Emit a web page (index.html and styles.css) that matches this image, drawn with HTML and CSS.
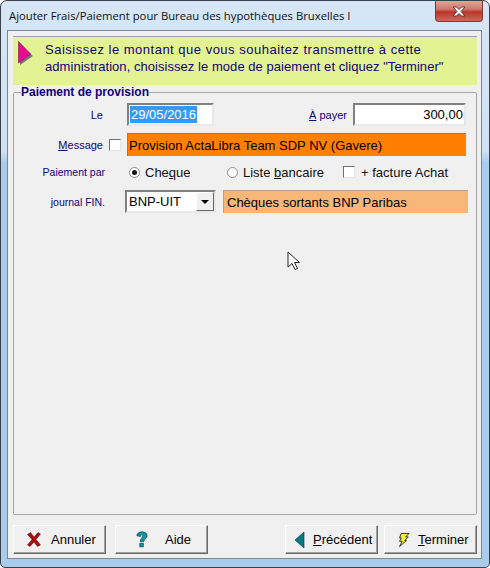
FILE: index.html
```html
<!DOCTYPE html>
<html lang="fr">
<head>
    <meta charset="UTF-8">
    <title>Ajouter Frais/Paiement</title>
    <link rel="stylesheet" href="styles.css">
</head>
<body>
    <div class="window">
        <!-- Title bar -->
        <div class="titlebar">
            <span class="title">Ajouter Frais/Paiement pour Bureau des hypothèques Bruxelles I</span>
            <div class="close">
                <svg width="16" height="11" viewBox="0 0 16 11"><path d="M2 1h3.500l2.500 2.500 2.500-2.500h3.500l-4 4.500 4 4.500h-3.500l-2.500-2.500-2.500 2.500h-3.500l4-4.500z" fill="#fff" stroke="#5a3a3a" stroke-width="1"/></svg>
            </div>
        </div>

        <div class="client">
            <!-- Hint band -->
            <div class="hint">
                <svg class="hint-arrow" width="15" height="24" viewBox="0 0 15 24">
                    <path d="M2 3l13 12-13 9z" fill="#777"/>
                    <path d="M0.500 0.500l12 12.500-12 9z" fill="#ee0a8c" stroke="#8a0a60" stroke-width="0.600"/>
                </svg>
                <p class="hint-text"><span class="line-one">Saisissez le montant que vous souhaitez transmettre à cette</span><br><span class="line-two">administration, choisissez le mode de paiement et cliquez "Terminer"</span></p>
            </div>

            <!-- Group box -->
            <fieldset class="group">
                <legend>Paiement de provision</legend>

                <div class="row row-date">
                    <label class="lbl">Le</label>
                    <div class="input input-date"><span class="selected">29/05/2016</span></div>
                    <label class="lbl lbl-payer"><u>À</u> payer</label>
                    <div class="input input-amount">300,00</div>
                </div>

                <div class="row row-message">
                    <label class="lbl"><u>M</u>essage</label>
                    <span class="check"></span>
                    <div class="readonly orange">Provision ActaLibra Team SDP NV (Gavere)</div>
                </div>

                <div class="row row-mode">
                    <label class="lbl">Paiement par</label>
                    <span class="radio on"></span>
                    <span class="opt opt-cheque">Che<u>q</u>ue</span>
                    <span class="radio"></span>
                    <span class="opt opt-liste">Liste <u>b</u>ancaire</span>
                    <span class="check"></span>
                    <span class="opt">+ facture Achat</span>
                </div>

                <div class="row row-journal">
                    <label class="lbl">journal FIN.</label>
                    <div class="combo">
                        <span class="combo-value">BNP-UIT</span>
                        <span class="combo-btn"><i></i></span>
                    </div>
                    <div class="readonly peach">Chèques sortants BNP Paribas</div>
                </div>
            </fieldset>

            <!-- Buttons -->
            <div class="buttons">
                <div class="btn-group">
                    <button class="btn btn-annuler">
                        <svg width="14" height="15" viewBox="0 0 14 15"><path d="M0.500 2.500l3-2 3.500 4.500 4-4.500 2.500 1.500-4.500 5.500 4.500 5.500-3 1.500-3.500-4.500-4 4.500-2.500-1.500 4.500-5.500z" fill="#a80d0d" stroke="#5c1010" stroke-width="0.500"/></svg>
                        <span>Annuler</span>
                    </button>
                    <button class="btn btn-aide">
                        <svg width="12" height="18" viewBox="0 0 14 20"><path d="M1 5c0-3 3-4.500 6-4.500s6 1.500 6 4.500c0 3-4 4-4 7h-4c0-4 3-4.500 3-7 0-1.500-3-1.500-3 1z" fill="#0a96a8" stroke="#06303a" stroke-width="0.700"/><rect x="4.500" y="14" width="4" height="4" fill="#0a96a8" stroke="#06303a" stroke-width="0.700"/></svg>
                        <span>Aide</span>
                    </button>
                </div>
                <div class="btn-group btn-group-right">
                    <button class="btn btn-prev">
                        <svg width="10" height="16" viewBox="0 0 10 16"><path d="M9 0v16l-9-8z" fill="#067a80" stroke="#0a2a50" stroke-width="0.600"/></svg>
                        <span><u>P</u>récédent</span>
                    </button>
                    <button class="btn btn-end">
                        <svg width="14" height="16" viewBox="0 0 16 17"><path d="M6 1h9l-4 4h3l-4 4h2l-8 7 3-6h-3l2-4h-2z" fill="#f8ee40" stroke="#222" stroke-width="1"/></svg>
                        <span><u>T</u>erminer</span>
                    </button>
                </div>
            </div>
        </div>

        <!-- Mouse pointer, lies over the form -->
        <svg class="pointer" width="14" height="20" viewBox="0 0 14 20"><path d="M1 1v15l4-3.500 3 6 2.500-1-3-6h5z" fill="#fff" stroke="#222" stroke-width="1"/></svg>
    </div>
</body>
</html>
```

FILE: styles.css
```css
/* Page */
html, body {
    margin: 0;
    height: 100%;
}

body {
    font-family: "Liberation Sans", Arial, sans-serif;
    font-size: 13px;
    color: #000;
}

/* Aero window frame */
.window {
    position: relative;
    box-sizing: border-box;
    width: 490px;
    height: 568px;
    display: flex;
    flex-direction: column;
    padding: 0 7px 8px 6px;
    border: 1px solid #3a4048;
    border-radius: 7px 7px 5px 5px;
    background: linear-gradient(to bottom, #d6e6f6 0, #cfe2f5 150px, #a9cbec 162px, #a9cbec 100%);
}

.titlebar {
    height: 29px;
    flex: none;
    display: flex;
    align-items: flex-start;
    justify-content: space-between;
}

.title {
    font-family: "Open Sans", "Noto Sans", sans-serif;
    font-size: 11.300px;
    line-height: 16px;
    margin: 7px 0 0 2px;
    color: #111;
}

.close {
    width: 46px;
    height: 20px;
    margin-right: -1px;
    display: flex;
    align-items: center;
    justify-content: center;
    border: 1px solid #7a3a38;
    border-top: 0;
    border-radius: 0 0 4px 4px;
    background: linear-gradient(to bottom, #e0a59a 0, #cf7a6e 40%, #b8342a 55%, #d0685a 100%);
}

/* Client area */
.client {
    flex: 1;
    min-height: 0;
    display: flex;
    flex-direction: column;
    padding: 5px 4px 4px 5px;
    background: #f0f0f0;
    border: 1px solid #7d8794;
}

/* Hint */
.hint {
    flex: none;
    height: 49px;
    display: flex;
    align-items: flex-start;
    gap: 12px;
    padding: 0 0 0 5px;
    background: #e3f393;
    border-top: 1px solid #a0a0a0;
    box-sizing: border-box;
}

.hint-arrow {
    margin-top: 4px;
    flex: none;
}

.hint-text {
    margin: 4px 0 0 0;
    font-size: 13px;
    line-height: 17px;
    color: #14007a;
    white-space: nowrap;
}

.line-one {
    letter-spacing: 0.500px;
}

.line-two {
    letter-spacing: 0.050px;
}

/* Group box */
.group {
    flex: 1;
    min-height: 0;
    margin: 0;
    padding: 0;
    border: 1px solid #a8a8a8;
    border-radius: 2px;
}

.group legend {
    margin-left: 7px;
    padding: 0;
    font-size: 12px;
    font-weight: bold;
    line-height: 15px;
    color: #14007a;
}

.row {
    display: flex;
    align-items: center;
}

.lbl {
    flex: none;
    width: 89px;
    text-align: right;
    font-size: 11px;
    color: #14007a;
}

.row-date {
    height: 23px;
    margin-top: 3px;
}

.row-date .lbl {
    margin-right: 24px;
}

.row-date .lbl-payer {
    width: auto;
    margin-left: 95px;
    margin-right: 6px;
}

.row-message {
    height: 23px;
    margin-top: 7px;
}

.row-message .lbl {
    margin-right: 6px;
}

.row-mode {
    height: 18px;
    margin-top: 7px;
}

.row-mode .lbl {
    width: 91px;
    margin-right: 24px;
    font-size: 10.500px;
}

.row-journal {
    height: 23px;
    margin-top: 9px;
}

.row-journal .lbl {
    width: 91px;
    margin-right: 20px;
    font-size: 10.500px;
}

/* Sunken fields */
.input {
    box-sizing: border-box;
    height: 23px;
    display: flex;
    align-items: center;
    padding: 0 1px;
    background: #fff;
    border: 2px solid;
    border-color: #808080 #e8e8e8 #e8e8e8 #808080;
    font-size: 13px;
}

.input-date {
    width: 87px;
}

.input-date .selected {
    background: #3399ff;
    color: #fff;
    line-height: 17px;
    padding: 0 1px;
}

.input-amount {
    width: 113px;
    justify-content: flex-end;
}

.readonly {
    box-sizing: border-box;
    height: 23px;
    display: flex;
    align-items: center;
    font-size: 13px;
    border-top: 1px solid #808080;
    border-left: 1px solid #808080;
}

.orange {
    width: 339px;
    padding-left: 1px;
    background: #ff8000;
}

.peach {
    width: 245px;
    margin-left: 7px;
    padding-left: 3px;
    background: #f6b779;
    border-color: #c0a080;
}

/* Checks and radios */
.check {
    flex: none;
    box-sizing: border-box;
    width: 12px;
    height: 12px;
    background: #fff;
    border: 1px solid;
    border-color: #707070 #e4e4e4 #e4e4e4 #707070;
    margin-right: 6px;
}

.radio {
    flex: none;
    box-sizing: border-box;
    width: 11px;
    height: 11px;
    border-radius: 50%;
    background: #fff;
    border: 1px solid #8a8a8a;
    margin-right: 5px;
    position: relative;
}

.radio.on::after {
    content: "";
    position: absolute;
    left: 2px;
    top: 2px;
    width: 5px;
    height: 5px;
    border-radius: 50%;
    background: #111;
}

.opt {
    font-size: 13px;
    color: #111;
}

.opt-cheque {
    width: 82px;
}

.opt-liste {
    width: 100px;
}

/* Combo */
.combo {
    flex: none;
    box-sizing: border-box;
    width: 91px;
    height: 23px;
    display: flex;
    align-items: stretch;
    background: #fff;
    border: 2px solid;
    border-color: #808080 #e8e8e8 #e8e8e8 #808080;
    font-size: 13px;
}

.combo-value {
    flex: 1;
    padding-left: 2px;
    line-height: 19px;
}

.combo-btn {
    width: 16px;
    display: flex;
    align-items: center;
    justify-content: center;
    background: #f0f0f0;
    border: 1px solid;
    border-color: #fff #666 #666 #fff;
}

.combo-btn i {
    width: 0;
    height: 0;
    border-left: 4px solid transparent;
    border-right: 4px solid transparent;
    border-top: 4px solid #000;
}

/* Bottom buttons */
.buttons {
    flex: none;
    display: flex;
    justify-content: space-between;
    margin-top: 10px;
}

.btn-group {
    display: flex;
    gap: 9px;
}

.btn-group-right {
    gap: 6px;
}

.btn {
    box-sizing: border-box;
    width: 93px;
    height: 29px;
    display: flex;
    align-items: center;
    padding: 0;
    background: #f0f0f0;
    border: 1px solid;
    border-color: #fff #696969 #696969 #fff;
    box-shadow: inset -1px -1px 0 #a0a0a0;
    font-family: "Liberation Sans", Arial, sans-serif;
    font-size: 13px;
    color: #000;
}

.btn-annuler {
    padding-left: 13px;
    gap: 10px;
}

.btn-aide {
    padding-left: 20px;
    gap: 17px;
}

.btn-prev {
    padding-left: 9px;
    gap: 8px;
}

.btn-end {
    padding-left: 11px;
    gap: 8px;
}

/* Mouse pointer */
.pointer {
    position: absolute;
    left: 286px;
    top: 250px;
}
```
